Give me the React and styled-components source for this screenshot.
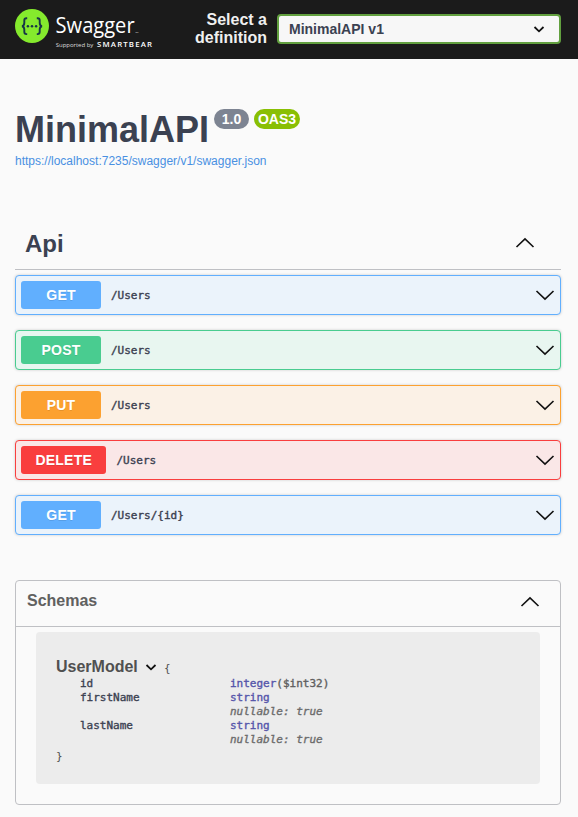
import React from "react";
import styled, { createGlobalStyle } from "styled-components";

const GlobalStyle = createGlobalStyle`
  * { box-sizing: border-box; }
  body {
    margin: 0;
    background: #fafafa;
    color: #3b4151;
    font-family: "Liberation Sans", Arial, sans-serif;
  }
`;

const mono = `"DejaVu Sans Mono", "Liberation Mono", monospace`;

const Page = styled.div`
  height: 817px;
  overflow: hidden;
`;

const Topbar = styled.header`
  display: flex;
  align-items: flex-start;
  height: 59px;
  padding: 0 17px 0 15px;
  background: #1b1b1b;
`;

const Logo = styled.svg`
  flex: none;
  width: 140px;
  height: 59px;
`;

const PickerLabel = styled.label`
  width: 112px;
  padding: 11px 0 0 30px;
  color: #f0f0f0;
  font-size: 16px;
  font-weight: 700;
  line-height: 18px;
  text-align: right;
`;

const Picker = styled.div`
  display: flex;
  flex: 1;
  align-items: center;
  justify-content: space-between;
  height: 30px;
  margin: 14px 0 0 10px;
  padding: 0 14px 0 10px;
  border: 2px solid #62a03f;
  border-radius: 4px;
  background: #f7f7f7;
  font-size: 14px;
  font-weight: 700;
`;

const Main = styled.main`
  padding: 0 17px 0 15px;
`;

const Info = styled.section`
  height: 160px;
  padding-top: 50px;
`;

const TitleRow = styled.div`
  display: flex;
  align-items: flex-start;
  height: 45px;
`;

const Title = styled.h1`
  width: 199px;
  margin: 0;
  font-size: 36px;
  line-height: 41px;
`;

const Badge = styled.span`
  width: ${(p) => p.$width}px;
  height: 20px;
  margin-right: 5px;
  border-radius: 10px;
  background: ${(p) => p.$color};
  color: #fff;
  font-size: 14px;
  font-weight: 700;
  line-height: 20px;
  text-align: center;
`;

const SpecLink = styled.a`
  display: block;
  color: #4990e2;
  font-size: 12px;
  line-height: 14px;
`;

const TagHeader = styled.div`
  display: flex;
  align-items: center;
  justify-content: space-between;
  height: 51px;
  margin-bottom: 5px;
  padding: 0 26px 1px 10px;
  border-bottom: 1px solid #bfc0c4;
`;

const TagName = styled.h2`
  margin: 0;
  font-size: 24px;
  line-height: 28px;
`;

const Operations = styled.div`
  display: flex;
  flex-direction: column;
  gap: 15px;
`;

const Operation = styled.div`
  display: flex;
  align-items: center;
  height: 40px;
  padding: 0 5px;
  border: 1px solid ${(p) => p.$color};
  border-radius: 4px;
  background: ${(p) => p.$tint};
  box-shadow: 0 0 3px rgba(0, 0, 0, 0.19);
`;

const Method = styled.span`
  min-width: 80px;
  height: 28px;
  padding: 0 14.5px;
  border-radius: 3px;
  background: ${(p) => p.$color};
  color: #fff;
  font-size: 14px;
  font-weight: 700;
  letter-spacing: 0.2px;
  line-height: 28px;
  text-align: center;
  text-shadow: 0 1px 0 rgba(0, 0, 0, 0.1);
`;

const Path = styled.span`
  flex: 1;
  padding: 2px 0 0 10px;
  font: 400 11px/16px ${mono};
  -webkit-text-stroke: 0.4px currentColor;
`;

const Icon = styled.svg`
  display: block;
  flex: none;
  width: ${(p) => p.$size}px;
  height: ${(p) => p.$size}px;
  fill: none;
  stroke: #111;
  stroke-width: ${(p) => p.$weight};
`;

const Schemas = styled.section`
  height: 225px;
  margin-top: 45px;
  border: 1px solid #bfc0c4;
  border-radius: 4px;
`;

const SchemasHeader = styled.div`
  display: flex;
  align-items: center;
  justify-content: space-between;
  height: 46px;
  padding: 0 20px 5px 11px;
  border-bottom: 1px solid #bfc0c4;
  color: #606060;
  font-size: 16px;
  font-weight: 700;
`;

const SchemaChevron = styled.span`
  padding-top: 3px;
`;

const Model = styled.div`
  height: 152px;
  margin: 5px 20px 0;
  padding: 25px 20px 0;
  border-radius: 4px;
  background: #ececec;
  color: #555;
  font: 400 11px/14px ${mono};
`;

const ModelTitle = styled.div`
  display: flex;
  align-items: center;
  height: 19px;
`;

const ModelName = styled.span`
  width: 89px;
  color: #505050;
  font: 700 16px/18px "Liberation Sans", Arial, sans-serif;
`;

const Brace = styled.span`
  padding: ${(p) => (p.$open ? "4px 0 0 7px" : "3px 0 0")};
  color: #505050;
`;

const Properties = styled.div`
  display: grid;
  grid-template-columns: 150px 1fr;
  padding: 1px 0 0 24px;
  color: #3b4151;
  -webkit-text-stroke: 0.35px currentColor;
`;

const PropertyType = styled.span`
  color: #5555aa;
`;

const Format = styled.span`
  color: #606060;
`;

const Note = styled.i`
  display: block;
  color: #6b6b6b;
`;

const operations = [
  { method: "GET", path: "/Users", color: "#61affe", tint: "#ebf3fb" },
  { method: "POST", path: "/Users", color: "#49cc90", tint: "#e8f6f0" },
  { method: "PUT", path: "/Users", color: "#fca130", tint: "#fbf1e6" },
  { method: "DELETE", path: "/Users", color: "#f93e3e", tint: "#fae7e7" },
  { method: "GET", path: "/Users/{id}", color: "#61affe", tint: "#ebf3fb" },
];

const properties = [
  { name: "id", type: "integer", format: "($int32)" },
  { name: "firstName", type: "string", nullable: true },
  { name: "lastName", type: "string", nullable: true },
];

function Chevron({ up }) {
  return (
    <Icon $size={20} $weight={1.6} viewBox="0 0 20 20">
      <path d={up ? "M1.5 13 10 4.8 18.5 13" : "M1.5 6 10 14.2 18.5 6"} />
    </Icon>
  );
}

function SmallChevron() {
  return (
    <Icon $size={12} $weight={1.8} viewBox="0 0 12 12">
      <path d="M1.5 4 6 8.3 10.5 4" />
    </Icon>
  );
}

function SwaggerLogo() {
  return (
    <Logo viewBox="0 0 140 59" aria-label="Swagger">
      <circle cx="17" cy="26" r="17" fill="#85ea2d" />
      <g fill="none" stroke="#173647" strokeWidth="1.9">
        <path d="M12.2 18.3h-.8q-2.1 0-2.1 2.3v2.2q0 3-2.3 3.4 2.3.4 2.3 3.4v2.2q0 2.3 2.1 2.3h.8" />
        <path d="M21.8 18.3h.8q2.1 0 2.1 2.3v2.2q0 3 2.3 3.4-2.3.4-2.3 3.4v2.2q0 2.3-2.1 2.3h-.8" />
      </g>
      <g fill="#173647">
        <circle cx="12.9" cy="26.3" r="1.25" />
        <circle cx="17" cy="26.3" r="1.25" />
        <circle cx="21.1" cy="26.3" r="1.25" />
      </g>
      <g fill="#fff" fontFamily="'Open Sans', 'Noto Sans', sans-serif">
        <text x="40.6" y="33" fontSize="21.5" textLength="79" lengthAdjust="spacingAndGlyphs">Swagger</text>
        <text x="120.5" y="33" fontSize="2">TM</text>
        <text x="40.8" y="46.7" fontSize="6" textLength="37.5" fill="#ddd">Supported by</text>
        <text x="82" y="46.7" fontSize="7.8" fontWeight="600" textLength="55">SMARTBEAR</text>
      </g>
    </Logo>
  );
}

export default function App() {
  return (
    <Page>
      <GlobalStyle />
      <Topbar>
        <SwaggerLogo />
        <PickerLabel>Select a definition</PickerLabel>
        <Picker>
          MinimalAPI v1
          <SmallChevron />
        </Picker>
      </Topbar>
      <Main>
        <Info>
          <TitleRow>
            <Title>MinimalAPI</Title>
            <Badge $width={35} $color="#7d8492">1.0</Badge>
            <Badge $width={46} $color="#89bf04">OAS3</Badge>
          </TitleRow>
          <SpecLink>https://localhost:7235/swagger/v1/swagger.json</SpecLink>
        </Info>
        <TagHeader>
          <TagName>Api</TagName>
          <Chevron up />
        </TagHeader>
        <Operations>
          {operations.map((op) => (
            <Operation key={op.method + op.path} $color={op.color} $tint={op.tint}>
              <Method $color={op.color}>{op.method}</Method>
              <Path>{op.path}</Path>
              <Chevron />
            </Operation>
          ))}
        </Operations>
        <Schemas>
          <SchemasHeader>
            Schemas
            <SchemaChevron>
              <Chevron up />
            </SchemaChevron>
          </SchemasHeader>
          <Model>
            <ModelTitle>
              <ModelName>UserModel</ModelName>
              <SmallChevron />
              <Brace $open>{"{"}</Brace>
            </ModelTitle>
            <Properties>
              {properties.map((property) => (
                <React.Fragment key={property.name}>
                  <span>{property.name}</span>
                  <div>
                    <PropertyType>{property.type}</PropertyType>
                    {property.format && <Format>{property.format}</Format>}
                    {property.nullable && <Note>nullable: true</Note>}
                  </div>
                </React.Fragment>
              ))}
            </Properties>
            <Brace as="div">{"}"}</Brace>
          </Model>
        </Schemas>
      </Main>
    </Page>
  );
}
